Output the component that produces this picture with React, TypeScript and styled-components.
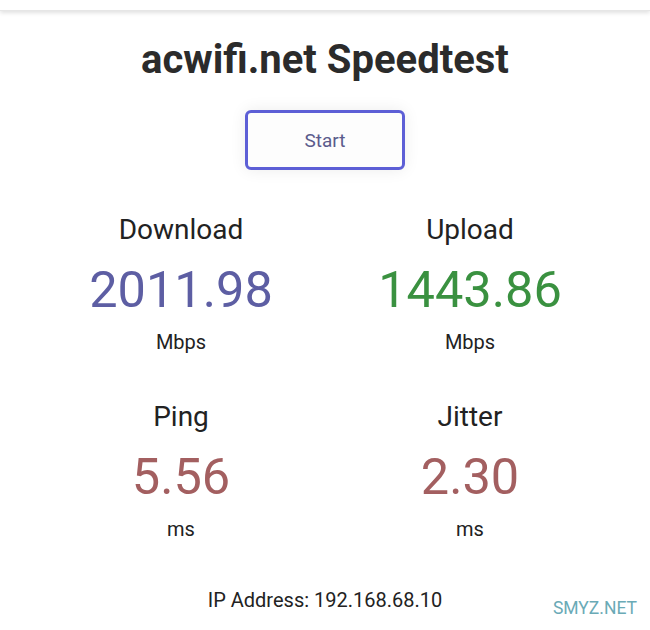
import styled, { createGlobalStyle } from "styled-components";

const Global = createGlobalStyle`
  html, body {
    margin: 0;
    padding: 0;
    background: #fff;
  }
  body {
    font-family: Roboto, "Noto Sans", sans-serif;
    color: #222;
  }
`

const stats = [
  { label: 'Download', value: '2011.98', unit: 'Mbps', color: '#5d5ea3' },
  { label: 'Upload', value: '1443.86', unit: 'Mbps', color: '#3a9140' },
  { label: 'Ping', value: '5.56', unit: 'ms', color: '#a35f60' },
  { label: 'Jitter', value: '2.30', unit: 'ms', color: '#a35f60' },
]

// style
const Page = styled.div`
  position: relative;
  width: 650px;
  height: 630px;
  overflow: hidden;
  background: #fff;
`
const TopBar = styled.div`
  height: 10px;
  background: #fff;
  box-shadow: 0 2px 4px rgba(0, 0, 0, 0.12);
  border-bottom: 1px solid #e6e6e6;
`
const Main = styled.main`
  display: flex;
  flex-direction: column;
  align-items: center;
`
const Title = styled.h1`
  margin: 27px 0 0;
  font-size: 40px;
  font-weight: 700;
  line-height: 44px;
  color: #2b2b2b;
  letter-spacing: 0;
`
const StartButton = styled.button`
  margin-top: 28px;
  width: 160px;
  height: 60px;
  border: 3px solid #5d5fd6;
  border-radius: 6px;
  background: #fdfdfd;
  box-shadow: 0 0 16px rgba(0, 0, 0, 0.08);
  font-family: Roboto, sans-serif;
  font-size: 19px;
  color: #5b5b8c;
`
const Grid = styled.div`
  margin-top: 44px;
  display: grid;
  grid-template-columns: 289px 289px;
  row-gap: 48px;
  margin-left: 1px;
`
const Stat = styled.div`
  display: flex;
  flex-direction: column;
  align-items: center;
`
const Label = styled.div`
  font-size: 28px;
  line-height: 32px;
  color: #222;
`
const Value = styled.div<{ $color: string }>`
  margin-top: 14px;
  font-size: 50.5px;
  line-height: 60px;
  color: ${p => p.$color};
`
const Unit = styled.div`
  margin-top: 11px;
  font-size: 20px;
  line-height: 22px;
  color: #222;
`
const Ip = styled.div`
  margin-top: 48px;
  font-size: 20px;
  line-height: 24px;
  color: #222;
`
const Watermark = styled.div`
  position: absolute;
  right: 13px;
  bottom: 12px;
  font-size: 17.5px;
  color: #6aaab6;
`

function App() {
  return (
    <Page>
      <Global />
      <TopBar />
      <Main>
        <Title>acwifi.net Speedtest</Title>
        <StartButton>Start</StartButton>
        <Grid>
          {stats.map((s, i) =>
            <Stat key={i}>
              <Label>{s.label}</Label>
              <Value $color={s.color}>{s.value}</Value>
              <Unit>{s.unit}</Unit>
            </Stat>
          )}
        </Grid>
        <Ip>IP Address: 192.168.68.10</Ip>
      </Main>
      <Watermark>SMYZ.NET</Watermark>
    </Page>
  )
}

export default App
